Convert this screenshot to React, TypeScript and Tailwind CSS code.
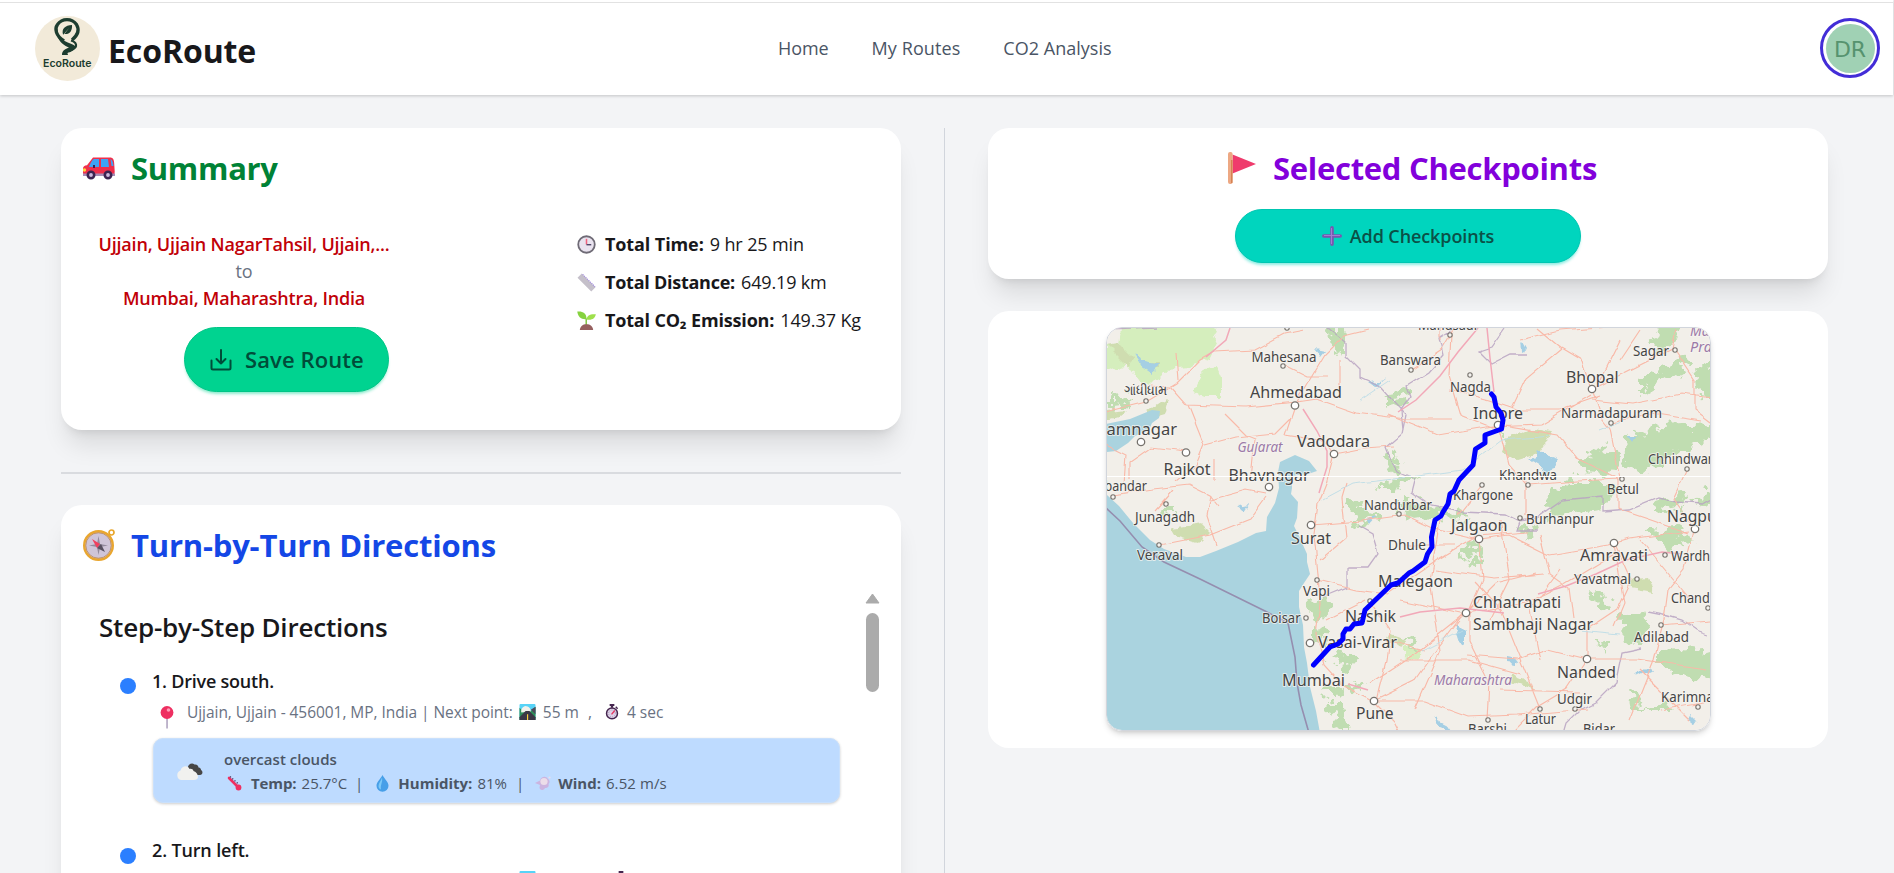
import React from 'react';

type P = { className?: string };

const Logo = () => (
  <svg className="h-[65px] w-[65px] shrink-0" viewBox="0 0 65 65">
    <circle cx="32.5" cy="32.5" r="32.5" fill="#f2ead9" />
    <path d="M29 25C20.500 19.500 19.500 12.500 22.500 8.500 27 2 37 2 41.500 8.500c3 5 1.500 10.500-4.500 15.500" fill="none" stroke="#1d3d30" strokeWidth="3.300" />
    <path d="M28 18.500c-1.500-6 2-9 9-9.500.5 6-2.500 9.500-7.500 9l4.500-6-5.500 6.500z" fill="#1d3d30" />
    <path d="M22.500 20.500c4 2.500 9 6 14 7.500 5 2 5.500 4 1 6.500l-5 2.500c0 1 .5 1.500.5 2h-6c0-4 2-5.500 7-7.500-5-2-10-6-11.500-11z" fill="#1d3d30" />
    <path d="M36 24.500c3 1 5.500 3 5 5.500-.500 2.500-4 4-7 5.500" fill="none" stroke="#1d3d30" strokeWidth="2.200" />
    <text x="8" y="50.500" fontFamily="Inter, sans-serif" fontWeight="600" fontSize="10.500" textLength="48.500" lengthAdjust="spacingAndGlyphs" fill="#1d3d30">EcoRoute</text>
  </svg>
);

const Car = ({ className }: P) => (
  <svg className={className} viewBox="0 0 32 32">
    <path d="M10 5.500h17c3 0 4 2 4.200 6l.5 8c0 3-.7 4-2 4H2c-1.500 0-2-1-2-3v-4c0-2 1.500-3 4-3.200z" fill="#ef2f4b" />
    <path d="M11 7h5v8H6c1.500-4 3-7 5-8zM18 7h7l1 8h-8zM27.500 7c2 1 2.500 3 3 7h-2z" fill="#3da4f5" />
    <path d="M0 21.500h32v2.500H0z" fill="#a98bb5" />
    <circle cx="1.500" cy="18" r="1.700" fill="#ffd23c" />
    <g fill="#cdb9dd" stroke="#3c2350" strokeWidth="2.600"><circle cx="8" cy="23" r="3.200" /><circle cx="25" cy="23" r="3.200" /></g>
    <path d="M10 13h2v3h-2z" fill="#3c2350" />
  </svg>
);

const Compass = ({ className }: P) => (
  <svg className={className} viewBox="0 0 32 32">
    <circle cx="28.500" cy="3.500" r="2.500" fill="none" stroke="#e8a62c" strokeWidth="1.700" />
    <circle cx="15.500" cy="16.500" r="14.300" fill="#cfc5d8" stroke="#e9a62f" strokeWidth="2.400" />
    <circle cx="15.500" cy="16.500" r="12.700" fill="none" stroke="#b5722e" strokeWidth=".6" />
    <path d="M15.500 7l1.500 8 8 1.500-8 1.500-1.500 8-1.500-8-8-1.500 8-1.500z" fill="#928a9c" />
    <path d="M22 23l-8-4 4-4z" fill="#57505f" /><path d="M9 10l8 5-3 4z" fill="#f0405f" />
  </svg>
);

const Flag = ({ className }: P) => (
  <svg className={className} viewBox="0 0 28 32">
    <path d="M4.500 2.500L28 12 4.500 21.500z" fill="#ef3b6c" />
    <rect x="0" y="0" width="4.600" height="32" rx="2" fill="#eda883" /><path d="M3.800 8v23" stroke="#cf7847" strokeWidth="1.200" />
  </svg>
);

const Clock = ({ className }: P) => (
  <svg className={className} viewBox="0 0 20 20">
    <circle cx="10" cy="10" r="8.700" fill="#e9e3ef" stroke="#6f6b76" strokeWidth="1.900" />
    <path d="M10 10V4" stroke="#f0627e" strokeWidth="1.600" /><path d="M10 10.200h5" stroke="#51476a" strokeWidth="1.500" />
  </svg>
);

const Ruler = ({ className }: P) => (
  <svg className={className} viewBox="0 0 20 20">
    <path d="M.5 5L5 .5 19.500 15 15 19.500z" fill="#c5c0ca" />
    <path d="M6 1.500L19 14.500" stroke="#9d83e0" strokeWidth="1.300" strokeDasharray="1 1.200" />
  </svg>
);

const Seedling = ({ className }: P) => (
  <svg className={className} viewBox="0 0 20 20">
    <path d="M9.700 15V8" stroke="#7cc43c" strokeWidth="1.500" />
    <path d="M10 8.500C4 9 1 6 .3.500 6 0 10 2 10 8.500z" fill="#86d23f" /><path d="M10 9c.5-4.500 4-6 9.800-5.500C19 8 16 10 10 9z" fill="#9ee04c" />
    <path d="M3 20c.5-4 3-6 7-6s6.500 2 7 6z" fill="#96605f" />
  </svg>
);

const Pin = ({ className }: P) => (
  <svg className={className} viewBox="0 0 14 23">
    <path d="M6.300 12h1.500v10.500H6.300z" fill="#ab9fbd" /><circle cx="7" cy="6.500" r="6.400" fill="#ee2f61" /><circle cx="8.500" cy="4" r="1.800" fill="#ff9fb8" />
  </svg>
);

const Road = ({ className }: P) => (
  <svg className={className} viewBox="0 0 17 17">
    <rect width="17" height="17" rx="1" fill="#57d3f7" />
    <path d="M0 4l3 3h10l4-4v14H0z" fill="#2f8f5b" /><path d="M2 9c-1-3 1-6 4-7 4 0 6 3 6 6z" fill="#f2f2ec" /><path d="M12 6l5-3v8z" fill="#4e4a5c" />
    <path d="M6.500 7.500h4L17 14v3H0v-3z" fill="#3b3746" /><path d="M8 11h1.200v6H8z" fill="#ffd23a" />
  </svg>
);

const Stopwatch = ({ className }: P) => (
  <svg className={className} viewBox="0 0 14 17">
    <path d="M4.500 0h5v2h-1.300v2H5.800V2H4.500z" fill="#45264f" /><path d="M11 3l2 2" stroke="#45264f" strokeWidth="1.500" />
    <circle cx="7" cy="10" r="5.800" fill="#ded2e8" stroke="#45264f" strokeWidth="1.600" /><path d="M6.500 11l3.500-4" stroke="#e8345e" strokeWidth="1.500" />
    <circle cx="7" cy="10" r="3.600" fill="none" stroke="#8c7c9c" strokeWidth=".8" strokeDasharray=".8 1.500" />
  </svg>
);

const Cloud = ({ className }: P) => (
  <svg className={className} viewBox="0 0 27 18">
    <path d="M12 6c-1-4 3.500-7 6.500-4.500C21 1 22.500 3 22.500 4.500c2 0 2.500 1.500 2.500 2.500 2.500 1.500 1.500 5-1 5h-6z" fill="#474747" />
    <path d="M5 17a5 5 0 0 1-.5-9.500C6 2.500 12 2 13.500 6c2-.5 3.500.5 4 2 3 1 4.500 3.500 4.500 6 0 2-2 3-4 3z" fill="#f1f1ef" />
  </svg>
);

const Thermometer = ({ className }: P) => (
  <svg className={className} viewBox="0 0 15 15">
    <path d="M2 2l8.500 8.500" stroke="#ef2f61" strokeWidth="2.600" strokeLinecap="round" /><circle cx="11.500" cy="11.500" r="2.900" fill="#ef2f61" />
    <path d="M3 .5l9 8" stroke="#4d3761" strokeWidth="1.300" strokeDasharray="1.300 1.700" />
  </svg>
);

const Drop = ({ className }: P) => (
  <svg className={className} viewBox="0 0 13 17">
    <path d="M6.500 0c2 4 6 7 6 10.700a6 6 0 0 1-12 0C.5 7 4.500 4 6.500 0z" fill="#479fe8" /><path d="M6 2.500C5 6 2.500 8 2.500 11c0 2 1 3 2.500 3.500C4 10 7 7 6 2.500z" fill="#7cc9f8" />
  </svg>
);

const Wind = ({ className }: P) => (
  <svg className={className} viewBox="0 0 16 15">
    <path d="M0 7l5-2.500c1-4 6-5 8-1.500 2 1 2 4 .5 5 1 3-1.500 4.500-3.500 4-1.500 3-5.500 2.500-5.500-.5l.5-2.500z" fill="#cbb4e0" /><circle cx="9" cy="5.500" r="3.600" fill="#ecdde9" /><circle cx="14.500" cy="1.500" r="1.100" fill="#e8dcee" />
  </svg>
);

const Plus = ({ className }: P) => (
  <svg className={className} viewBox="0 0 20 20">
    <path d="M10 1.800v16.400M1.800 10h16.400" stroke="#7a56b0" strokeWidth="3.600" strokeLinecap="round" /><path d="M9.500 2v16M2 9.500h16" stroke="#a07fd0" strokeWidth="1.100" />
  </svg>
);

const Save = ({ className }: P) => (
  <svg className={className} viewBox="0 0 22 22" fill="none" stroke="#004c39" strokeWidth="2" strokeLinecap="round" strokeLinejoin="round">
    <path d="M11 1v13.500M6.500 10l4.500 4.500 4.500-4.500M1.500 11.500v7.500a1.500 1.500 0 0 0 1.500 1.500h16a1.500 1.500 0 0 0 1.500-1.500v-7.500" />
  </svg>
);

type Label = [string, number, number, number, number];
const cities: Label[] = [
  ['Mandsaur', 1418, 330, 61, 14], ['Mahesana', 1251.5, 361.500, 65, 14], ['Banswara', 1380, 365, 61, 14], ['Ahmedabad', 1250, 398, 92, 16],
  ['Jamnagar', 1102, 435, 75, 16], ['Rajkot', 1163.5, 475, 47, 16], ['Vadodara', 1297, 446.5, 73, 16], ['Bhavnagar', 1228.5, 481, 81, 16],
  ['Porbandar', 1084, 491, 63, 14], ['Junagadh', 1135, 522, 60, 14], ['Veraval', 1137, 560, 46, 14], ['Nandurbar', 1364, 509.500, 68, 14],
  ['Nagda', 1450, 392, 41, 14], ['Indore', 1473, 418.500, 50, 16], ['Bhopal', 1566, 382.500, 52.500, 16], ['Narmadapuram', 1561, 418, 101, 14],
  ['Sagar', 1633, 355.500, 36, 14], ['Chhindwara', 1648, 464, 72, 14], ['Khandwa', 1499, 479.500, 58, 14], ['Khargone', 1453, 500, 60, 14],
  ['Betul', 1607, 494, 32, 14], ['Burhanpur', 1526, 524, 68, 14], ['Jalgaon', 1451, 531, 56.500, 16], ['Nagpur', 1667, 522, 56, 16],
  ['Surat', 1291, 544, 40, 16], ['Dhule', 1388, 550, 38, 14], ['Vapi', 1303, 596, 27, 14], ['Malegaon', 1378, 587, 75, 16],
  ['Boisar', 1262, 623, 38.500, 14], ['Nashik', 1345, 622, 51, 16], ['Vasai-Virar', 1318, 648, 79, 16], ['Mumbai', 1282, 685.500, 63, 16],
  ['Pune', 1356, 719, 37.500, 16], ['Amravati', 1580, 561, 68, 16], ['Wardha', 1671, 560.500, 46, 14], ['Yavatmal', 1574, 584, 57, 14],
  ['Chandrapur', 1671, 602.500, 72, 14], ['Chhatrapati', 1473, 608, 88, 16], ['Sambhaji Nagar', 1473, 629.500, 120, 16], ['Adilabad', 1634, 641.500, 55, 14],
  ['Nanded', 1557, 678, 59, 16], ['Udgir', 1557, 704, 35, 14], ['Karimnagar', 1661, 701.500, 74, 14], ['Latur', 1525, 724, 31, 14],
  ['Barshi', 1468, 734, 39, 14], ['Bidar', 1583, 734, 32, 14], ['ગાંધીધામ', 1124, 395, 43, 14],
];
const states: Label[] = [
  ['Gujarat', 1237.500, 451.500, 45, 14], ['Maharashtra', 1434, 685, 78, 14], ['Madhya', 1690, 336, 50, 14], ['Pradesh', 1690, 352, 52, 14],
];
const bigDots = [[1295, 405.5], [1141, 442], [1186, 452.500], [1334, 454], [1269, 487], [1311, 525], [1592, 389], [1498, 425], [1479, 539], [1695, 529], [1614, 543], [1466, 613], [1587, 659], [1374, 701], [1310, 643]];
const smallDots = [[1287, 328], [1283, 366], [1146, 401], [1113, 497], [1166, 504], [1159, 545], [1399, 514], [1450, 335], [1411, 370], [1470, 375], [1675, 350], [1611, 423], [1482, 485], [1528, 485], [1622, 479], [1687, 469], [1520, 518], [1317, 580], [1306, 618], [1370, 601], [1665, 555], [1637, 579], [1661, 625], [1708, 608], [1540, 709], [1575, 709], [1488, 720], [1698, 707]];

const RouteMap = () => (
  <svg className="block h-full w-full" viewBox="1107 328 603 402" preserveAspectRatio="none">
    <defs>
      <filter id="rough" x="-5%" y="-5%" width="110%" height="110%">
        <feTurbulence type="fractalNoise" baseFrequency=".09" numOctaves="3" seed="4" result="n" />
        <feDisplacementMap in="SourceGraphic" in2="n" scale="26" xChannelSelector="R" yChannelSelector="G" />
      </filter>
      <filter id="soft" x="-5%" y="-5%" width="110%" height="110%">
        <feTurbulence type="fractalNoise" baseFrequency=".07" numOctaves="3" seed="4" result="n" />
        <feDisplacementMap in="SourceGraphic" in2="n" scale="12" xChannelSelector="R" yChannelSelector="G" />
      </filter>
      <filter id="wobble" x="-5%" y="-5%" width="110%" height="110%">
        <feTurbulence type="fractalNoise" baseFrequency=".05" numOctaves="2" seed="9" result="n" />
        <feDisplacementMap in="SourceGraphic" in2="n" scale="6" xChannelSelector="R" yChannelSelector="G" />
      </filter>
    </defs>
    <rect x="1106" y="327" width="605" height="404" fill="#f2efe9" />
    <g fill="#d5eebd" filter="url(#soft)">
      <path d="M1122 320l90 0 6 20-10 20-20 8-22 2-16 16-18-12-14-20z" />
      <path d="M1203 370l14-6 6 14 0 18-18 0-12-4zM1106 345l18 2 0 18-18 6z" />
      <path d="M1404 645l16 8-2 6-14-4z" />
    </g>
    <g fill="#c0ddb1" filter="url(#rough)">
      <path d="M1328 328h16l2 24-8 4-8-14zM1110 395l24 4-6 8-18 2zM1386 395l22-4 0 8-22 6zM1390 448l10 20-4 8-10-14z" />
      <path d="M1345 502l22 6 10 12-24 4zM1375 490l30-16 14 4-24 12zM1660 328l20-4-10 22-20 8zM1640 380l40-22 8 6-20 14-28 16z" />
      <path d="M1697 370l20-10v40h-16zM1625 440l34-14 56-2v12l-44 20-26 18-22-6zM1580 460l28-14 12 8-8 20-28-2z" />
      <path d="M1545 495l30-14 34 0 10 10-20 20-24 2-28 4zM1655 500l30-6-4 14-28 6zM1690 500l26-10v18z" />
      <path d="M1520 530l20-8 4 6-22 10zM1646 530l30-2 22 12-30 8zM1590 590l24 12-4 8-18-6zM1622 616l22-4 4 20-10 14-14-6z" />
      <path d="M1660 650l40-4 20 14v26l-36-12-24-4zM1596 645l10-4 0 8zM1627 690l8 2 4 16 30-8 4 10-44 0z" />
      <path d="M1308 598l16 2 4 14-10 6-8-8zM1314 625l10 2-2 18-8-4zM1332 660l16-8 10 8-12 10zM1320 690l16-8 8 6-10 14zM1328 706l16 0 4 24-12 0zM1400 640l10-2 10 8-18-2z" />
      <path d="M1350 680l14 4-4 10-10-4zM1400 500l50 8 20 14-30-4-40-6zM1495 425l10-2 0 8zM1165 508l10 0 2 8-10 0zM1464 545l14-4-2 12-16 6zM1470 560l10-4 0 8-12 4z" />
    </g>
    <g fill="#cfddb0" filter="url(#soft)">
      <path d="M1505 440l28-12 18 4-14 22-20 6-14-10zM1172 528l30-4 8 8-12 12-20-6zM1106 345l12-2 14 14-4 10zM1628 580l20-2 6 14-24-4zM1390 632l16 6-4 10-16-6zM1147 364l14 0 0 6-14 0zM1150 410l18-12-4 16-14 4zM1510 674l20 8 4 8-22-8zM1108 412l20-2-8 6-14 4z" />
    </g>
    <g fill="#aad3df">
      <path d="M1106 424l24-5 22-9 8 1-1 7-7 5-3 7-14 6-7 7-12 8-10 1z" />
      <path d="M1106 494l13 12 14 17 17 17 14 9 22 8 14 0 16-6 22-9 18-9 10-2 1-14 8-14 4-15-1-16 2-10 15-7 14 6 8 10-9 3-16 2 0 12-1 6 7 8-1 16-3 8 5 10 8 18 0 8 3 12-6 9-5 8 0 16 4 18 1 22 3 16 3 24 6 24 4 22H1106z" />
    </g>
    <g fill="#a5cfe4" filter="url(#soft)">
      <path d="M1133 352l8 10 20 4-10 8-14-10zM1538 448l8 6 12 4-6 10-4 6-14-8-8-6 10-2zM1366 520l12-4-8 10zM1369 382l18-4-12 8zM1458 625l8 8 0 10-12-8zM1640 672l8-8 4 6-16 8zM1430 715l20 10 6 8-16-6zM1690 714l8 8-6 2zM1508 658l10 2-2 4-8-1zM1312 351l10 2-4 5zM1240 508l10-2-4 6zM1628 434l10 0-6 8zM1522 340l5 9-4 2z" />
    </g>
    <g fill="none" stroke="#b9a3c2" strokeWidth="1.300" strokeOpacity=".85" filter="url(#wobble)">
      <path d="M1328 328l18 14 0 14 14 14 0 8 22 10 14 16 10 10-4 20-16 14 4 10 8 14 14 6M1455 328l-16 10 4 18-14 16-22 14 4 10-10 14 2 20M1415 476l-4 16 20 14 30 6 44 2 12 6 20-2 26-18 40-4 0 16 26-2 30-12 16 4 28 2 18-10" />
      <path d="M1520 518l-4 12 20 0M1358 526l14 8 6 20-10 14-20 0 0 20-24 10M1648 612l20 4 14 4 14 10 12 4M1642 648l-20 4-6 30-20 20-16 8-14 14-4 14M1106 330l50-2M1505 328l-14 20-12 4 12 12 20-10 14 0" />
    </g>
    <path d="M1106 508l14 13 22 26 22 15 36 17 65 32 23 12 7 34 2 26 4 22 8 28" fill="none" stroke="#958eaf" strokeWidth="1.600" />
    <g fill="none" stroke="#f9b9a8" strokeWidth="1.150" filter="url(#wobble)">
      <path d="M1106 412l40-10 30-18 24-24 14-8 40-2 30-16 20-4M1150 385l20 2 16 18 60 2 50-5 20-3 40 14 50 6 46 0M1178 380l-2-26M1188 405l16 40-8 20-20 16M1205 445l30-8 40-4 16-16M1295 405l-10 30 40 6 8 12M1295 405l30-50 20-20 24-6M1287 366l20 10 20 0M1340 390l0-30" />
      <path d="M1113 495l40-6 36-4 20 10 10 12M1186 452l-36-4-20 14 0 18M1210 495l-4 20 10 30M1210 500l36-10 20 4M1215 460l0 20M1225 415l20 20 10 4-4 40M1106 445l20 10-2 30M1160 545l50-10 40-16 16-22M1173 490l-18 20" />
      <path d="M1334 454l-8 30-8 20-4 30 4 40 2 30-4 30 8 30 20 22 28 14M1334 454l30-6 30-2M1311 525l50-4 44-6 30 14 44 10M1320 560l26-22-4-40 4-14M1317 580l40 10 30 4 50-34 40-24 50-4M1366 600l-40 20M1370 601l20 30-4 30-10 40M1374 701l20 20 6 12M1374 701l40-20 14-20 36-48M1374 701l50 0 44 16 50-2 70-6" />
      <path d="M1451 335l-2 40 12 40 30 12 50-2 50-30M1411 370l30-20 12-20M1498 425l-60 10-50-20M1498 425l10 40 18 20 0 30M1450 390l40 10 30 10 40 0 40-14M1482 485l-24 30M1520 340l40-10 50-4M1562 348l-36 30-14 30M1562 348l-24-20M1592 389l-10-30-20-12M1592 389l10 30 8 10 6 30 4 20" />
      <path d="M1592 400l40 4 50-10 30 4M1592 389l80-40 4-20M1675 350l20 30 0 30 16 12M1611 423l40-10 50 8M1498 425l60 10 20 24 40 20 0 30 30 10 40 14M1528 485l50-4 40-2M1687 469l-14 30 20 28M1620 340l-20 40M1440 340l0-14M1640 330l-20 30" />
      <path d="M1479 539l30-4 40 20 60-10 20-6 60-8M1540 535l10 40 20 14 4 30M1479 539l4 40-14 32 0 30 20 40-2 40M1466 613l-50 40-46 30M1466 613l60-10 40-20 50-30M1466 613l30-30 40-10M1587 659l0-30 30-20 14-30-16-36M1587 659l-40-10-30 10-50-4M1587 659l-20 30-30 18-30 30M1587 659l50 0 70 10M1614 543l10 60-10 24M1694 530l-10 40-16 20-4 30-10 40-24 60M1661 625l50-4M1540 709l-20-50-20-50-24-26M1405 545l50 0M1400 660l70 0 50 14M1440 520l-10 60 10 70-26 60M1500 520l10 60-20 40M1560 570l-30 40 10 50M1640 670l50 50M1640 540l50 60M1434 570l60 8 50-4M1400 600l66 14M1385 640l40 10M1500 690l80 2M1660 710l50-8" />
    </g>
    <g fill="none" stroke="#f2a8b8" strokeWidth="1.500">
      <path d="M1230 328l-4 12-20 17M1303 409l14 22 10 20 0 16-8 26M1478 328l-20 24-18 24-24 24-18 12M1487 328l3 30 4 34M1400 617l20-5 40-4 44 5M1538 594l28-8 30-12 30-14 36-8 20 2M1348 684l20 6" />
    </g>
    <g fill="none" stroke="#bcdce6" strokeWidth=".9" filter="url(#wobble)">
      <path d="M1322 500l30-16 50-6 60-8 40-30 50-4M1360 400l30-20M1600 430l20-8M1462 630l-40 20M1580 630l40 4" />
    </g>
    <g fill="#fff" stroke="#77736e">
      {bigDots.map(([x, y], i) => <circle key={i} cx={x} cy={y} r="3.700" strokeWidth="1.300" />)}
      {smallDots.map(([x, y], i) => <circle key={i} cx={x} cy={y} r="2.200" strokeWidth="1.100" fill="#f5f3ef" />)}
    </g>
    <g fontFamily="'Noto Sans', sans-serif" stroke="#f7f5f1" strokeOpacity=".75" strokeWidth="2" paintOrder="stroke" strokeLinejoin="round">
      {cities.map(([t, x, y, w, s]) => <text key={t} x={x} y={y} textLength={w} lengthAdjust="spacingAndGlyphs" fontSize={s} fill="#454545">{t}</text>)}
      {states.map(([t, x, y, w, s]) => <text key={t} x={x} y={y} textLength={w} lengthAdjust="spacingAndGlyphs" fontSize={s} fill="#9c7aa8" fontStyle="italic">{t}</text>)}
    </g>
    <path d="M1106 476.500h605" stroke="#fff" strokeWidth="1" />
    <path d="M1491.500 394L1494 397L1496 407L1501 413L1503 420L1501.500 429L1485 435L1485 443L1475.500 449L1473 465L1459 480L1454 491L1450 494L1448 504L1443 512L1441 516L1435 520L1431.500 537L1432 547L1427.500 554L1425 562L1413 571L1409 573L1398 583L1391 585L1365 610L1362 623L1354 624L1350 629L1346 629L1343 634L1343 639L1338 644L1330 647L1313.500 665" fill="none" stroke="#0000ff" strokeWidth="5" strokeLinecap="round" strokeLinejoin="round" />
  </svg>
);

const Stat = ({ icon, label, value, lt, vt }: { icon: React.ReactNode; label: string; value: string; lt: string; vt: string }) => (
  <div className="flex h-[27px] items-center leading-[27px]">
    {icon}
    <span className={`ml-[9px] font-bold ${lt}`}>{label}</span>
    <span className={`ml-[6px] ${vt}`}>{value}</span>
  </div>
);

export default function App() {
  return (
    <div className="flex h-[873px] w-full flex-col overflow-hidden whitespace-nowrap bg-[#f3f4f6] font-['Open_Sans',sans-serif] text-[18px] text-[#18181b]">
      <header className="z-10 mr-px flex h-[95px] shrink-0 flex-col bg-white pt-[2px] shadow-[0_1px_3px_rgba(0,0,0,0.2)]">
        <div className="grid h-[93px] grid-cols-[778px_1fr_auto] border-t border-[#e2e2e2] pr-[13px]">
          <div className="flex items-start pl-[35px] pt-[13px]">
            <Logo />
            <span className="ml-[8px] mt-[15px] text-[32px] font-bold leading-[40px] tracking-[-0.1px]">EcoRoute</span>
          </div>
          <nav className="flex gap-[43px] pt-[32px] leading-[27px] text-[#4a5565]">
            <a className="tracking-[-0.1px]">Home</a>
            <a className="tracking-[0.1px]">My Routes</a>
            <a className="tracking-[0.02px]">CO2 Analysis</a>
          </nav>
          <div className="mt-[15px] flex h-[60px] w-[60px] items-center justify-center rounded-full border-[3px] border-[#432dd7]">
            <div className="flex h-[49px] w-[49px] items-center justify-center rounded-full bg-[#a0d1b4] pt-[2px] font-['DejaVu_Sans',sans-serif] text-[22px] text-[#56936f]">DR</div>
          </div>
        </div>
      </header>

      <main className="flex min-h-0 flex-1 px-[61px] pt-[33px]">
        <section className="flex w-[840px] shrink-0 flex-col">
          <div className="h-[302px] shrink-0 rounded-[21px] bg-white pt-[20px] shadow-[0_20px_25px_-5px_rgba(0,0,0,0.1),0_8px_10px_-6px_rgba(0,0,0,0.1)]">
            <h2 className="flex h-[40px] items-center pl-[22px] text-[31px] font-bold leading-[40px] text-[#008236]">
              <Car className="h-8 w-8" />
              <span className="ml-[16px] tracking-[-0.3px]">Summary</span>
            </h2>
            <div className="mt-[43px] flex justify-between pl-[38px] pr-[38px]">
              <div className="flex w-[290px] flex-col items-center leading-[27px]">
                <p className="font-semibold tracking-[-0.18px] text-[#c10007]">Ujjain, Ujjain NagarTahsil, Ujjain,...</p>
                <p className="text-[#6a7282]">to</p>
                <p className="font-semibold tracking-[-0.2px] text-[#c10007]">Mumbai, Maharashtra, India</p>
                <button className="mt-[15px] flex h-[65px] w-[205px] items-center self-end rounded-full border border-[#00c586] bg-[#00d390] pl-[25px] text-[22px] font-semibold text-[#004c39] shadow-[0_3px_3px_-1px_rgba(0,211,144,0.45)]">
                  <Save className="h-[22px] w-[22px]" />
                  <span className="ml-[13px] tracking-[0.1px]">Save Route</span>
                </button>
              </div>
              <div className="flex w-[286px] flex-col gap-[11px]">
                <Stat icon={<Clock className="h-[19px] w-[19px] shrink-0" />} label="Total Time:" value="9 hr 25 min" lt="tracking-[-0.1px]" vt="tracking-[-0.12px]" />
                <Stat icon={<Ruler className="h-[19px] w-[19px] shrink-0" />} label="Total Distance:" value="649.19 km" lt="tracking-[-0.25px]" vt="tracking-[-0.15px]" />
                <Stat icon={<Seedling className="h-[19px] w-[19px] shrink-0" />} label="Total CO₂ Emission:" value="149.37 Kg" lt="tracking-[-0.17px]" vt="tracking-[-0.1px]" />
              </div>
            </div>
          </div>

          <div className="mt-[42px] h-[2px] shrink-0 bg-[#d9dbdf]" />

          <div className="mt-[31px] flex h-[500px] shrink-0 flex-col rounded-[21px] bg-white pt-[20px] shadow-[0_20px_25px_-5px_rgba(0,0,0,0.1),0_8px_10px_-6px_rgba(0,0,0,0.1)]">
            <h2 className="flex h-[40px] items-center pl-[22px] text-[31px] font-bold leading-[40px] text-[#1447e6]">
              <Compass className="h-8 w-8" />
              <span className="ml-[16px] tracking-[-0.2px]">Turn-by-Turn Directions</span>
            </h2>
            <div className="mt-[28px] flex justify-between pl-[38px] pr-[21px]">
              <div className="w-[741px]">
                <h3 className="mt-[16px] text-[26px] font-semibold leading-[36px] tracking-[-0.2px]">Step-by-Step Directions</h3>
                <div className="mt-[23px] flex pl-[21px]">
                  <div className="mt-[10px] h-4 w-4 rounded-full bg-[#2b7fff]" />
                  <div className="ml-[16px] w-[688px]">
                    <p className="font-semibold leading-[27px] tracking-[-0.22px]">1. Drive south.</p>
                    <div className="mt-[5px] flex h-[24px] items-center pl-[8px] text-[15.5px] leading-[24px] text-[#6a7282]">
                      <Pin className="mt-[10px] h-[23px] w-[14px]" />
                      <span className="ml-[13px] tracking-[-0.05px]">Ujjain, Ujjain - 456001, MP, India | Next point:</span>
                      <Road className="ml-[6px] h-[16px] w-[17px]" />
                      <span className="ml-[7px]">55 m</span><span className="ml-[9px]">,</span>
                      <Stopwatch className="ml-[13px] h-[16px] w-[14px]" />
                      <span className="ml-[8px]">4 sec</span>
                    </div>
                    <div className="ml-px mt-[14px] flex h-[65px] w-[687px] items-start rounded-[10px] border border-[#c9e0fc] bg-[#bedbff] pl-[22px] pt-[9px] text-[15px] text-[#4a5565] shadow-[0_1px_3px_rgba(0,0,0,0.2)]">
                      <Cloud className="mt-[15px] h-[18px] w-[27px]" />
                      <div className="ml-[21px] leading-[23px]">
                        <p className="font-semibold tracking-[0.02px]">overcast clouds</p>
                        <div className="mt-px flex items-center">
                          <Thermometer className="ml-[3px] h-[15px] w-[15px]" />
                          <b className="ml-[9px] tracking-[-0.1px]">Temp:</b><span className="ml-[5px]">25.7°C</span><span className="ml-[8px]">|</span>
                          <Drop className="ml-[13px] h-[17px] w-[13px]" />
                          <b className="ml-[9px]">Humidity:</b><span className="ml-[5px]">81%</span><span className="ml-[9px]">|</span>
                          <Wind className="ml-[11px] h-[15px] w-[16px]" />
                          <b className="ml-[7px]">Wind:</b><span className="ml-[5px] tracking-[0.1px]">6.52 m/s</span>
                        </div>
                      </div>
                    </div>
                  </div>
                </div>
                <div className="mt-[34px] flex pl-[21px]">
                  <div className="mt-[11px] h-4 w-4 rounded-full bg-[#2b7fff]" />
                  <div className="ml-[16px]">
                    <p className="font-semibold leading-[27px] tracking-[-0.15px]">2. Turn left.</p>
                    <div className="mt-[7px] flex pl-[367px]">
                      <Road className="h-[16px] w-[17px]" />
                      <Stopwatch className="ml-[78px] h-[16px] w-[14px]" />
                    </div>
                  </div>
                </div>
              </div>
              <div className="flex w-[15px] flex-col items-center">
                <svg className="h-[11px] w-[15px]" viewBox="0 0 15 11"><path d="M7.500 1L14 10H1z" fill="#ababab" stroke="#ababab" strokeLinejoin="round" /></svg>
                <div className="mt-[9px] h-[79px] w-[13px] rounded-full bg-[#ababab]" />
              </div>
            </div>
          </div>
        </section>

        <div className="ml-[43px] w-px shrink-0 bg-[#d1d5dc]" />

        <section className="ml-[43px] w-[840px] shrink-0">
          <div className="flex h-[151px] flex-col items-center rounded-[21px] bg-white pt-[20px] shadow-[0_20px_25px_-5px_rgba(0,0,0,0.1),0_8px_10px_-6px_rgba(0,0,0,0.1)]">
            <h2 className="flex h-[40px] items-center pl-[9px] text-[31px] font-bold leading-[40px] text-[#8200db]">
              <Flag className="h-8 w-7" />
              <span className="ml-[17px] tracking-[-0.28px]">Selected Checkpoints</span>
            </h2>
            <button className="mt-[21px] flex h-[54px] w-[346px] items-center justify-center rounded-full border border-[#00c6b1] bg-[#00d5be] font-semibold text-[#0b5147] shadow-[0_3px_3px_-1px_rgba(0,213,190,0.45)]">
              <Plus className="h-5 w-5" />
              <span className="ml-[8px] tracking-[-0.1px]">Add Checkpoints</span>
            </button>
          </div>
          <div className="mt-[32px] flex h-[437px] justify-center rounded-[21px] bg-white pt-[16px]">
            <div className="h-[404px] w-[605px] overflow-hidden rounded-[16px] border border-[#d1d5dc] shadow-[0_4px_6px_-1px_rgba(0,0,0,0.15),0_2px_4px_-2px_rgba(0,0,0,0.12)]">
              <RouteMap />
            </div>
          </div>
        </section>
      </main>
    </div>
  );
}
